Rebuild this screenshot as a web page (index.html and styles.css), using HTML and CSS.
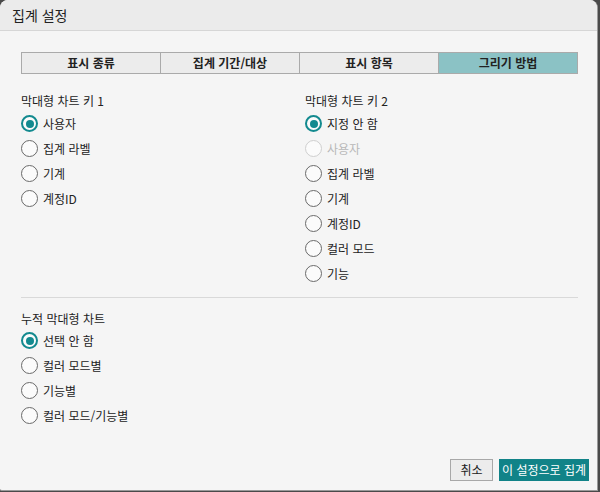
FILE: index.html
```html
<!DOCTYPE html>
<html lang="ko">
<head>
<meta charset="utf-8">
<link rel="stylesheet" href="styles.css">
</head>
<body>
<div class="dialog">
  <div class="header">집계 설정</div>
  <div class="body">
    <div class="tabs">
      <div class="tab">표시 종류</div>
      <div class="tab">집계 기간/대상</div>
      <div class="tab">표시 항목</div>
      <div class="tab active">그리기 방법</div>
    </div>
    <div class="cols">
      <div class="group">
        <div class="gtitle first">막대형 차트 키 1</div>
        <label class="radio checked"><span class="dot"></span>사용자</label>
        <label class="radio"><span class="dot"></span>집계 라벨</label>
        <label class="radio"><span class="dot"></span>기계</label>
        <label class="radio"><span class="dot"></span>계정ID</label>
      </div>
      <div class="group">
        <div class="gtitle first">막대형 차트 키 2</div>
        <label class="radio checked"><span class="dot"></span>지정 안 함</label>
        <label class="radio disabled"><span class="dot"></span>사용자</label>
        <label class="radio"><span class="dot"></span>집계 라벨</label>
        <label class="radio"><span class="dot"></span>기계</label>
        <label class="radio"><span class="dot"></span>계정ID</label>
        <label class="radio"><span class="dot"></span>컬러 모드</label>
        <label class="radio"><span class="dot"></span>기능</label>
      </div>
    </div>
    <div class="sep"></div>
    <div class="group">
      <div class="gtitle">누적 막대형 차트</div>
      <label class="radio checked"><span class="dot"></span>선택 안 함</label>
      <label class="radio"><span class="dot"></span>컬러 모드별</label>
      <label class="radio"><span class="dot"></span>기능별</label>
      <label class="radio"><span class="dot"></span>컬러 모드/기능별</label>
    </div>
    <div class="spacer"></div>
    <div class="buttons">
      <button class="btn cancel">취소</button>
      <button class="btn ok">이 설정으로 집계</button>
    </div>
  </div>
</div>
</body>
</html>
```
FILE: styles.css
```css
html, body {
  margin: 0;
  padding: 0;
  width: 600px;
  height: 492px;
  background: #4a4a4a;
  overflow: hidden;
}
body {
  font-family: "Noto Sans CJK KR", "Noto Sans", sans-serif;
  color: #222;
}
.dialog {
  width: 597px;
  height: 490px;
  background: #f5f5f5;
  border-right: 1px solid #9a9a9a;
  border-bottom: 1px solid #9a9a9a;
  border-radius: 8px 8px 0 2px;
  display: flex;
  flex-direction: column;
  overflow: hidden;
}
.header {
  height: 31px;
  box-sizing: border-box;
  background: #ebebeb;
  border-bottom: 1px solid #d6d6d6;
  font-size: 14px;
  line-height: 30px;
  padding-left: 12px;
  color: #222;
}
.body {
  flex: 1;
  display: flex;
  flex-direction: column;
  padding: 21px 8px 9px 21px;
}
.tabs {
  display: flex;
  width: 557px;
  height: 22px;
  box-sizing: border-box;
  border: 1px solid #aaa;
  background: #ececec;
}
.tab {
  flex: 1;
  text-align: center;
  font-size: 12px;
  font-weight: bold;
  line-height: 20px;
  border-left: 1px solid #aaa;
  color: #222;
}
.tab:first-child { border-left: none; }
.tab.active { background: #8bc2c5; }
.cols {
  display: grid;
  grid-template-columns: 284px 1fr;
  margin-top: 18px;
}
.gtitle {
  font-size: 12px;
  line-height: 18px;
  height: 18px;
  color: #222;
}
.gtitle.first { height: 19px; }
.radio {
  display: flex;
  align-items: center;
  height: 25px;
  font-size: 12px;
  color: #222;
}
.dot {
  width: 17px;
  height: 17px;
  box-sizing: border-box;
  border: 1.5px solid #6a6a6a;
  border-radius: 50%;
  background: #fbfbfb;
  margin-right: 5px;
  position: relative;
}
.radio.checked .dot {
  border: 2px solid #138a8f;
}
.radio.checked .dot::after {
  content: "";
  position: absolute;
  left: 2.5px;
  top: 2.5px;
  width: 8px;
  height: 8px;
  border-radius: 50%;
  background: #138a8f;
}
.radio.disabled { color: #b8b8b8; }
.radio.disabled .dot { border-color: #cfcfcf; }
.sep {
  width: 557px;
  height: 1px;
  background: #d9d9d9;
  margin-top: 11px;
  margin-bottom: 12px;
}
.spacer { flex: 1; }
.buttons {
  display: flex;
  justify-content: flex-end;
  gap: 6px;
}
.btn {
  height: 22px;
  box-sizing: border-box;
  font-family: "Noto Sans CJK KR", "Noto Sans", sans-serif;
  font-size: 12px;
  padding: 0;
  line-height: 20px;
  cursor: pointer;
}
.cancel {
  width: 43px;
  background: #ececec;
  border: 1px solid #a8a8a8;
  color: #222;
}
.ok {
  width: 90px;
  background: #118388;
  border: 1px solid #118388;
  color: #fff;
}
```
